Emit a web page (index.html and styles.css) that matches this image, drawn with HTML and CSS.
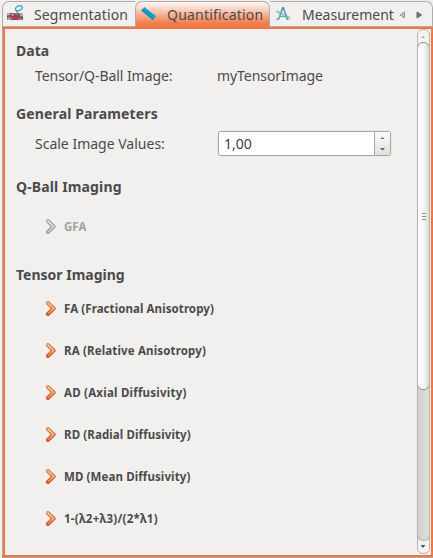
FILE: index.html
```html
<!DOCTYPE html>
<html lang="en">
<head>
<meta charset="utf-8">
<title>Quantification</title>
<link rel="stylesheet" href="styles.css">
</head>
<body>
<svg class="defs" width="0" height="0" aria-hidden="true">
  <defs>
    <linearGradient id="orange" gradientUnits="userSpaceOnUse" x1="0" y1="0" x2="0" y2="15"><stop offset="0" stop-color="#fbd38c"/><stop offset=".5" stop-color="#f7b27a"/><stop offset="1" stop-color="#f0693c"/></linearGradient>
    <linearGradient id="orange-edge" gradientUnits="userSpaceOnUse" x1="0" y1="0" x2="0" y2="15"><stop offset="0" stop-color="#cf8149"/><stop offset="1" stop-color="#cc3517"/></linearGradient>
    <linearGradient id="gray" gradientUnits="userSpaceOnUse" x1="0" y1="0" x2="0" y2="15"><stop offset="0" stop-color="#eeeeee"/><stop offset="1" stop-color="#b9b9b9"/></linearGradient>
    <symbol id="chevron" viewBox="0 0 10 15"><path class="edge" d="M2 2.100 7.600 7.500 2 12.900" fill="none" stroke-width="4" stroke-linecap="round" stroke-linejoin="round"/><path class="core" d="M2 2.100 7.600 7.500 2 12.900" fill="none" stroke-width="2" stroke-linecap="round" stroke-linejoin="round"/></symbol>
  </defs>
</svg>
<div class="window">
  <nav class="tabs">
    <div class="tab tab-first">
      <svg class="icon-seg" width="17" height="18" viewBox="0 0 17 18"><path fill="#858080" d="M0 8h16v7H0z"/><path fill="#b5b0b0" d="M0 8h3v2H0zM4 9h2v2H4zM13 8h3v3h-3zM1 13h2v2H1z"/><path fill="#444" d="M3 8h2v1H3zM0 11h1v1H0zM14 12h2v1h-2zM5 14h2v1H5z"/><path fill="#b0365a" d="M2 10h3v1h2V9h6v4h-2v2H7v-2H4v-1H2z"/><ellipse cx="11.800" cy="3.200" rx="3.500" ry="2.300" transform="rotate(-22 11.800 3.200)" fill="#eef6f8" stroke="#4ba5be" stroke-width="1.400"/><path d="m9 5 1.500 3-1 2" fill="none" stroke="#4ba5be" stroke-width="1.400"/></svg>
      <span class="label seg">Segmentation</span>
    </div>
    <div class="tab tab-active">
      <svg class="icon-rule" width="16" height="16" viewBox="0 0 16 16"><path d="m.3 4.500 3-3.500L15 10.300 12 14Z" fill="#05a5cf"/><path d="m.3 4.500 11.700 9.500.8-1L1 3.600Z" fill="#28859b"/></svg>
      <span class="label quant">Quantification</span>
    </div>
    <div class="tab tab-last">
      <svg class="icon-meas" width="17" height="16" viewBox="0 0 17 16"><path d="m.5 6 1.500-2 13.500 7-1 3Z" fill="#a9c8cd"/><path d="M7.500 2 4 12.500 1.500 13.500M8.500 2l4 12" fill="none" stroke="#5fa9b8" stroke-width="1.700"/><path d="M5 10.500h6" stroke="#6caab6"/><path d="M7 1h2v3H7z" fill="#69858c"/></svg>
      <span class="label meas">Measurement</span>
      <svg class="arrows" width="24" height="10" viewBox="0 0 24 10"><path d="M5.500 2v6L1 5Z" fill="#c4c3c1" stroke="#999"/><path d="M18 2v6l4.500-3Z" fill="#777" stroke="#666"/></svg>
    </div>
  </nav>
  <main class="pane">
    <section class="content">
      <h2 class="h-data">Data</h2>
      <div class="field field-data"><span class="name tensor">Tensor/Q-Ball Image:</span><span class="value">myTensorImage</span></div>
      <h2 class="h-general">General Parameters</h2>
      <div class="field field-scale"><span class="name scale">Scale Image Values:</span>
        <div class="spin"><span class="number">1,00</span><div class="buttons"><svg width="15" height="23" viewBox="0 0 15 23"><path d="m5.500 7 2-2 2 2Z" fill="#666"/><path d="M5 16h5l-2.500 2.700Z" fill="#666"/></svg></div></div>
      </div>
      <h2 class="h-qball">Q-Ball Imaging</h2>
      <div class="action disabled"><svg width="10" height="15"><use href="#chevron"/></svg><span class="a-gfa">GFA</span></div>
      <h2 class="h-tensor">Tensor Imaging</h2>
      <div class="actions">
        <div class="action"><svg width="10" height="15"><use href="#chevron"/></svg><span class="a-fa">FA (Fractional Anisotropy)</span></div>
        <div class="action"><svg width="10" height="15"><use href="#chevron"/></svg><span class="a-ra">RA (Relative Anisotropy)</span></div>
        <div class="action"><svg width="10" height="15"><use href="#chevron"/></svg><span class="a-ad">AD (Axial Diffusivity)</span></div>
        <div class="action"><svg width="10" height="15"><use href="#chevron"/></svg><span class="a-rd">RD (Radial Diffusivity)</span></div>
        <div class="action"><svg width="10" height="15"><use href="#chevron"/></svg><span class="a-md">MD (Mean Diffusivity)</span></div>
        <div class="action"><svg width="10" height="15"><use href="#chevron"/></svg><span class="a-la">1-(λ2+λ3)/(2*λ1)</span></div>
      </div>
    </section>
    <aside class="scrollbar">
      <div class="up"><svg width="10" height="12" viewBox="0 0 10 12"><path d="m3 8 2-2 2 2Z" fill="#aaa"/></svg></div>
      <div class="thumb"><i></i><i></i><i></i></div>
      <div class="track"></div>
      <div class="down"><svg width="10" height="12" viewBox="0 0 10 12"><path d="M2.500 5h5L5 8Z" fill="#555"/></svg></div>
    </aside>
  </main>
</div>
</body>
</html>
```

FILE: styles.css
```css
* { box-sizing: border-box; }
body { margin: 0; background: #f0efee; color: #4b4b4b; font: 14px/20px "Noto Sans", sans-serif; overflow: hidden; }
.defs { position: absolute; }
svg { display: block; flex: none; }
span, h2 { white-space: nowrap; }
.window { width: 433px; height: 558px; padding: 1px 0 1px 2px; }

.tabs { display: flex; height: 26px; width: 431px; }
.tab { display: flex; height: 26px; border: 1px solid #aeaeac; background: #f1f0ee; }
.tab-first { width: 133px; border-right: 0; border-radius: 7px 0 0 0; padding-left: 4px; }
.tab-active { width: 135px; border-bottom: 0; border-radius: 7px 7px 0 0; padding-left: 5px; background: linear-gradient(#fff6f2 0, #fbd9cb 25%, #f6a280 60%, #f07746 90%); }
.tab-last { width: 163px; border-left: 0; border-radius: 0 7px 0 0; padding-left: 5px; }
.label { margin-top: 3px; }
.icon-seg { margin: 3px 10px 0 0; }
.icon-rule { margin: 4px 10px 0 0; }
.icon-meas { margin: 4px 10px 0 0; }
.seg { width: 94px; letter-spacing: .13px; }
.quant { width: 97px; letter-spacing: .2px; }
.meas { width: 92px; }
.arrows { margin: 8px 0 0 5px; }

.pane { display: flex; height: 530px; width: 431px; border: solid #f0773f; border-width: 2px 2px 2px 3px; border-left: 0; box-shadow: inset 1px 0 #b4b0ad, inset 3px 0 #f0773f, 0 1px #b4aaa4; background: #f1f0ee; }
.content { width: 415px; padding: 12px 0 0 14px; }
h2 { margin: 0; font: bold 14px/20px "Noto Sans", sans-serif; }
.h-general, .h-qball { letter-spacing: .14px; }
.field { display: flex; padding-left: 19px; height: 20px; }
.name { width: 182px; flex: none; }
.tensor, .value { letter-spacing: -.06px; }
.field-data { margin-top: 5px; }
.h-general { margin-top: 18px; }
.field-scale { margin-top: 10px; }
.h-qball { margin-top: 23px; }
.h-tensor { margin-top: 28px; }
.spin { display: flex; flex: none; width: 173px; height: 25px; margin: -3px 0 0 1px; border: 1px solid #a6a5a2; border-radius: 3px; background: #fff; box-shadow: 0 0 0 1px #e9e8e5; color: #3c3c3c; }
.number { width: 155px; padding: 2px 0 0 5px; }
.buttons { width: 16px; border-left: 1px solid #aaa; background: linear-gradient(#fbfbfb, #e2e0dd); border-radius: 0 2px 2px 0; }
.action { display: flex; height: 20px; padding-left: 30px; font-weight: bold; font-size: 11.5px; }
.action svg { margin: 2px 8px 0 0; }
.edge { stroke: var(--edge, url(#orange-edge)); }
.core { stroke: var(--core, url(#orange)); }
.actions { display: flex; flex-direction: column; gap: 22px; margin-top: 14px; }
.a-fa { letter-spacing: .08px; }
.a-ra { letter-spacing: .15px; }
.a-ad { letter-spacing: .23px; }
.a-rd, .a-md { letter-spacing: .11px; }
.a-la { letter-spacing: .27px; }
.disabled { --edge: #999; --core: url(#gray); margin-top: 20px; color: #a3a2a0; }

.scrollbar { display: flex; flex-direction: column; width: 13px; height: 525px; border: 1px solid #b6b3b0; border-radius: 6px; background: #dad7d4; overflow: hidden; }
.up { height: 18px; margin-bottom: -6px; background: #f5f4f3; flex: none; }
.thumb { position: relative; z-index: 2; display: flex; flex-direction: column; align-items: center; justify-content: center; gap: 2px; height: 348px; margin: 0 -1px; border: 1px solid #92908d; border-radius: 6px; background: linear-gradient(90deg, #fff, #f8f8f8 50%, #dcd9d6); flex: none; }
.thumb i { width: 4px; height: 1px; background: #8f8d8b; }
.track { position: relative; z-index: 1; height: 157px; margin: -6px -1px 0; border: 1px solid #b6b3b0; border-top: 0; border-radius: 0 0 6px 6px; flex: none; background: linear-gradient(90deg, #d5d1ce, #dfdcd9); }
.down { height: 18px; margin-top: -6px; padding-top: 5px; background: #f5f4f3; flex: none; }
```
